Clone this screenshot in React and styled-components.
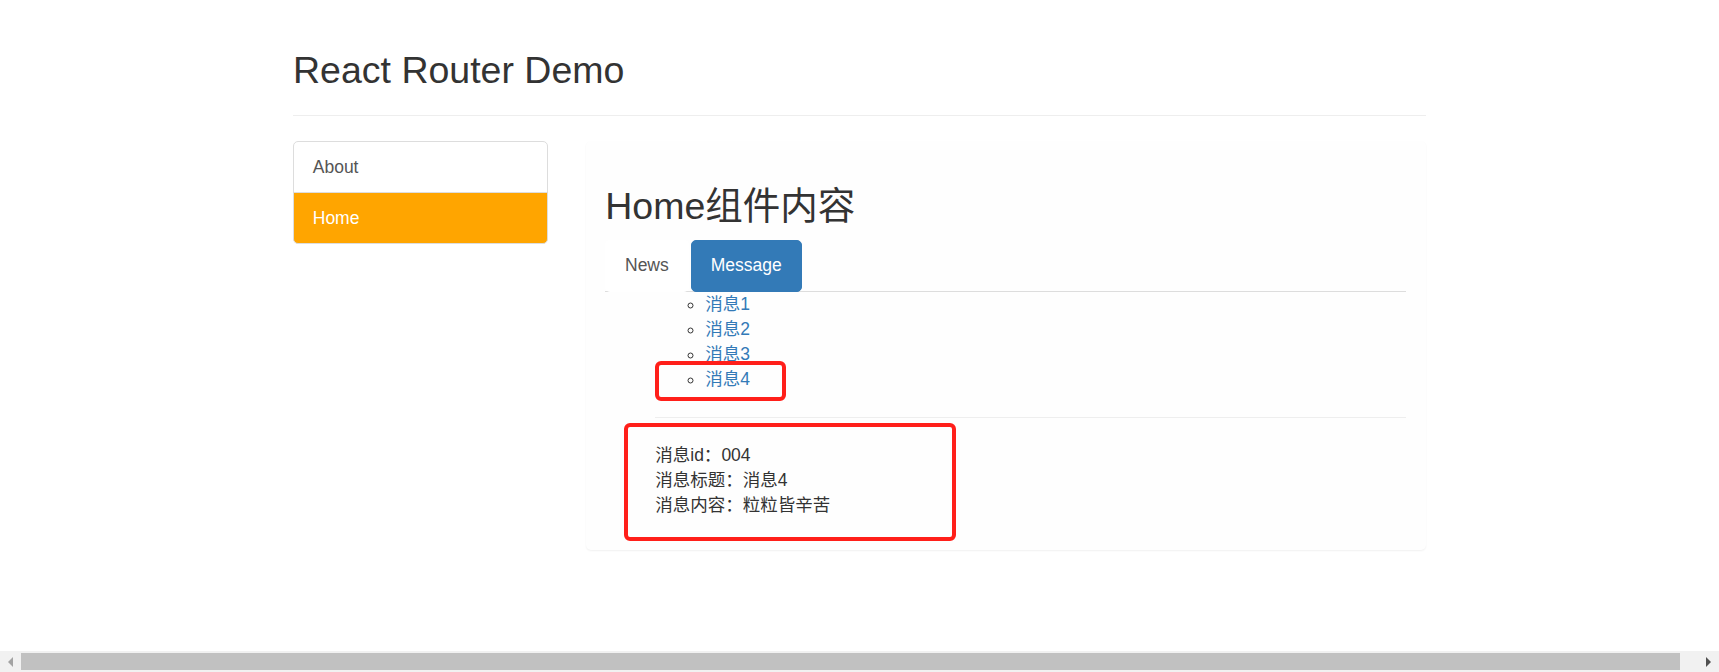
import styled, { createGlobalStyle } from "styled-components";

const GlobalStyle = createGlobalStyle`
  * { box-sizing: border-box; }
  html, body {
    margin: 0;
    padding: 0;
    background: #fff;
    overflow: hidden;
  }
  body {
    font-family: "Liberation Sans", "Noto Sans CJK SC", sans-serif;
    font-size: 17.5px;
    line-height: 25px;
    color: #333;
  }
`;

const messages = [
  { id: "001", title: "消息1" },
  { id: "002", title: "消息2" },
  { id: "003", title: "消息3" },
  { id: "004", title: "消息4" },
];

export default function App() {
  const current = messages[3];

  return (
    <>
      <GlobalStyle />
      <Page>
        <PageHeader>
          <Heading>React Router Demo</Heading>
        </PageHeader>
        <Row>
          <ListGroup>
            <ListItem href="#about">About</ListItem>
            <ListItem href="#home" $active>
              Home
            </ListItem>
          </ListGroup>
          <Panel>
            <Heading $top>Home组件内容</Heading>
            <Tabs>
              <li>
                <Tab href="#news">News</Tab>
              </li>
              <li>
                <Tab href="#message" $active>
                  Message
                </Tab>
              </li>
            </Tabs>
            <Outer>
              <MessageList>
                {messages.map((m) => (
                  <MessageItem key={m.id}>
                    <MessageLink href={`#${m.id}`}>{m.title}</MessageLink>
                    {m.id === current.id && (
                      <Marker $left={-50} $top={-6} $w={131} $h={40} />
                    )}
                  </MessageItem>
                ))}
              </MessageList>
              <Divider />
              <Detail>
                <Marker $left={-31} $top={-20} $w={332} $h={118} />
                <div>消息id：{current.id}</div>
                <div>消息标题：{current.title}</div>
                <div>消息内容：粒粒皆辛苦</div>
              </Detail>
            </Outer>
          </Panel>
        </Row>
      </Page>
      <Scrollbar>
        <Arrow $dir="left" />
        <Thumb />
        <Arrow $dir="right" />
      </Scrollbar>
    </>
  );
}

const Page = styled.div`
  width: 1719px;
  padding-left: 293px;
`;

const PageHeader = styled.div`
  width: 1133px;
  margin: 50px 0 25px;
  padding-bottom: 11.25px;
  border-bottom: 1px solid #eee;
`;

const Heading = styled.h2`
  margin: ${(p) => (p.$top ? "25px" : "0")} 0 12.5px;
  font-size: 37.5px;
  line-height: 41.25px;
  font-weight: 400;
  color: #333;
`;

const Row = styled.div`
  display: flex;
  align-items: flex-start;
  gap: 37.5px;
`;

const ListGroup = styled.div`
  width: 255px;
  display: flex;
  flex-direction: column;
`;

const ListItem = styled.a`
  display: block;
  padding: 12.5px 18.75px;
  margin-bottom: -1px;
  border: 1px solid #ddd;
  background: ${(p) => (p.$active ? "orange" : "#fff")};
  color: ${(p) => (p.$active ? "#fff" : "#555")};
  text-decoration: none;

  &:first-child {
    border-radius: 5px 5px 0 0;
  }
  &:last-child {
    border-radius: 0 0 5px 5px;
    margin-bottom: 0;
  }
`;

const Panel = styled.div`
  width: 840.5px;
  padding: 18.75px;
  margin-bottom: 25px;
  background: #fefefe;
  border: 1px solid transparent;
  border-radius: 5px;
  box-shadow: 0 1px 2px rgba(0, 0, 0, 0.06);
`;

const Tabs = styled.ul`
  display: flex;
  margin: 0;
  padding: 0;
  list-style: none;
  border-bottom: 1px solid #ddd;

  li {
    margin-bottom: -1px;
  }
`;

const Tab = styled.a`
  display: block;
  margin-right: 2.5px;
  padding: 12.5px 18.75px;
  border: 1px solid ${(p) => (p.$active ? "#337ab7" : "transparent")};
  border-radius: 5px;
  background: ${(p) => (p.$active ? "#337ab7" : "#fff")};
  color: ${(p) => (p.$active ? "#fff" : "#555")};
  text-decoration: none;
`;

const Outer = styled.div`
  margin: 0 0 12.5px;
  padding-left: 50px;
`;

const MessageList = styled.ul`
  margin: 0;
  padding-left: 50px;
  list-style: circle;
`;

const MessageItem = styled.li`
  position: relative;
`;

const MessageLink = styled.a`
  color: #337ab7;
  text-decoration: none;
`;

const Divider = styled.hr`
  margin: 25px 0;
  border: 0;
  border-top: 1px solid #eee;
`;

const Detail = styled.div`
  position: relative;
  color: #333;
`;

const Marker = styled.span`
  position: absolute;
  left: ${(p) => p.$left}px;
  top: ${(p) => p.$top}px;
  width: ${(p) => p.$w}px;
  height: ${(p) => p.$h}px;
  border: 4px solid #ff1f1a;
  border-radius: 6px;
  pointer-events: none;
`;

const Scrollbar = styled.div`
  position: fixed;
  left: 0;
  right: 0;
  bottom: 0;
  height: 21px;
  display: flex;
  align-items: center;
  background: #f1f1f1;
`;

const Arrow = styled.div`
  width: 21px;
  height: 21px;
  display: flex;
  align-items: center;
  justify-content: center;

  &::before {
    content: "";
    width: 0;
    height: 0;
    border-top: 5px solid transparent;
    border-bottom: 5px solid transparent;
    ${(p) =>
      p.$dir === "left"
        ? "border-right: 5px solid #a3a3a3;"
        : "border-left: 5px solid #505050;"}
  }
`;

const Thumb = styled.div`
  flex: 1;
  height: 17px;
  margin-right: 18px;
  background: #c1c1c1;
`;
